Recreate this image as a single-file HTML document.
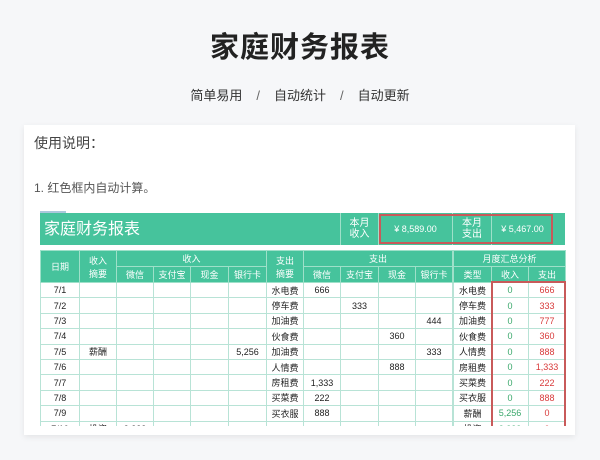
<!DOCTYPE html>
<html><head><meta charset="utf-8"><style>
*{margin:0;padding:0;box-sizing:border-box}
body{width:600px;height:460px;background:#f6f7f9;font-family:"Liberation Sans","Noto Sans CJK SC",sans-serif;position:relative;overflow:hidden}
.t{position:absolute;left:0;width:600px;top:24px;text-align:center;font-size:29px;font-weight:bold;color:#222;letter-spacing:1px}
.s{position:absolute;left:0;width:600px;top:85px;text-align:center;font-size:13px;color:#333}
.s span{margin:0 14px;color:#666}
.card{position:absolute;left:24px;top:125px;width:551px;height:310px;background:#fff;box-shadow:0 2px 6px rgba(0,0,0,.08)}
.clip{position:absolute;left:0;top:0;width:551px;height:301px;overflow:hidden}
.h1{position:absolute;left:10px;top:8px;font-size:14px;color:#444}
.h2{position:absolute;left:10px;top:54px;font-size:12px;color:#555}
.bar{position:absolute;left:16px;top:88px;width:525px;height:32px;background:#46c39c;color:#fff}
.bar div{position:absolute;top:0;height:32px;border-left:1px solid #9ee0c9;font-size:10px;display:flex;align-items:center;justify-content:center;text-align:center;line-height:11px}
.red{position:absolute;border:2px solid #c85a5a}
table{position:absolute;border-collapse:collapse;table-layout:fixed;font-size:9px;color:#222}
td{border:1px solid #b8e3d6;height:15.4px;text-align:center;overflow:hidden;white-space:nowrap;padding:0}
tr.g td{background:#46c39c;color:#fff;border-color:#9ee0c9;height:16px}
.gr{color:#3aa86b}.rd{color:#d83a3a}
</style></head><body>
<div class="t">家庭财务报表</div>
<div class="s">简单易用<span>/</span>自动统计<span>/</span>自动更新</div>
<div class="card"><div class="clip">
<div class="h1">使用说明：</div>
<div class="h2">1. 红色框内自动计算。</div>
<div style="position:absolute;left:16px;top:86px;width:26px;height:2px;background:#aac8dc"></div>
<div class="bar">
<div style="left:0;width:300px;border:none;justify-content:flex-start;padding-left:4px;font-size:16px">家庭财务报表</div>
<div style="left:300px;width:38px">本月<br>收入</div>
<div style="left:338px;width:74px;font-size:9px">¥ 8,589.00</div>
<div style="left:412px;width:39px">本月<br>支出</div>
<div style="left:451px;width:62px;font-size:9px">¥ 5,467.00</div>
</div>
<div class="red" style="left:355px;top:89px;width:174px;height:30px"></div>
<table style="left:16px;top:125px;width:412px">
<colgroup><col style="width:39px"><col style="width:37px"><col style="width:37px"><col style="width:37px"><col style="width:38px"><col style="width:38px"><col style="width:37px"><col style="width:37px"><col style="width:38px"><col style="width:37px"><col style="width:37px"></colgroup>
<tr class="g"><td rowspan="2">日期</td><td rowspan="2">收入<br>摘要</td><td colspan="4">收入</td><td rowspan="2">支出<br>摘要</td><td colspan="4">支出</td></tr>
<tr class="g"><td>微信</td><td>支付宝</td><td>现金</td><td>银行卡</td><td>微信</td><td>支付宝</td><td>现金</td><td>银行卡</td></tr>
<tr><td>7/1</td><td></td><td></td><td></td><td></td><td></td><td>水电费</td><td>666</td><td></td><td></td><td></td></tr>
<tr><td>7/2</td><td></td><td></td><td></td><td></td><td></td><td>停车费</td><td></td><td>333</td><td></td><td></td></tr>
<tr><td>7/3</td><td></td><td></td><td></td><td></td><td></td><td>加油费</td><td></td><td></td><td></td><td>444</td></tr>
<tr><td>7/4</td><td></td><td></td><td></td><td></td><td></td><td>伙食费</td><td></td><td></td><td>360</td><td></td></tr>
<tr><td>7/5</td><td>薪酬</td><td></td><td></td><td></td><td>5,256</td><td>加油费</td><td></td><td></td><td></td><td>333</td></tr>
<tr><td>7/6</td><td></td><td></td><td></td><td></td><td></td><td>人情费</td><td></td><td></td><td>888</td><td></td></tr>
<tr><td>7/7</td><td></td><td></td><td></td><td></td><td></td><td>房租费</td><td>1,333</td><td></td><td></td><td></td></tr>
<tr><td>7/8</td><td></td><td></td><td></td><td></td><td></td><td>买菜费</td><td>222</td><td></td><td></td><td></td></tr>
<tr><td>7/9</td><td></td><td></td><td></td><td></td><td></td><td>买衣服</td><td>888</td><td></td><td></td><td></td></tr>
<tr><td>7/10</td><td>投资</td><td>3,333</td><td></td><td></td><td></td><td></td><td></td><td></td><td></td><td></td></tr>
</table>
<table style="left:429px;top:125px;width:112px">
<colgroup><col style="width:38px"><col style="width:37px"><col style="width:37px"></colgroup>
<tr class="g"><td colspan="3">月度汇总分析</td></tr>
<tr class="g"><td>类型</td><td>收入</td><td>支出</td></tr>
<tr><td>水电费</td><td class="gr">0</td><td class="rd">666</td></tr>
<tr><td>停车费</td><td class="gr">0</td><td class="rd">333</td></tr>
<tr><td>加油费</td><td class="gr">0</td><td class="rd">777</td></tr>
<tr><td>伙食费</td><td class="gr">0</td><td class="rd">360</td></tr>
<tr><td>人情费</td><td class="gr">0</td><td class="rd">888</td></tr>
<tr><td>房租费</td><td class="gr">0</td><td class="rd">1,333</td></tr>
<tr><td>买菜费</td><td class="gr">0</td><td class="rd">222</td></tr>
<tr><td>买衣服</td><td class="gr">0</td><td class="rd">888</td></tr>
<tr><td>薪酬</td><td class="gr">5,256</td><td class="rd">0</td></tr>
<tr><td>投资</td><td class="gr">3,333</td><td class="rd">0</td></tr>
</table>
<div class="red" style="left:467px;top:156px;width:75px;height:170px"></div>
</div></div>
</body></html>
